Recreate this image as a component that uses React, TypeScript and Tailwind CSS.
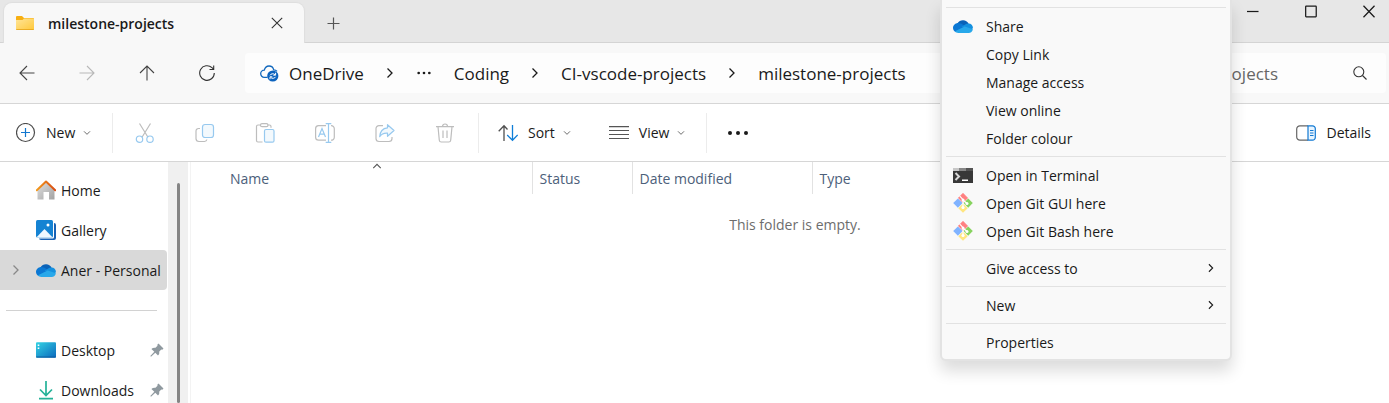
import React from "react";

type IconProps = { className?: string };

const Chevron = ({ className = "" }: IconProps) => (
  <svg viewBox="0 0 12 12" className={`shrink-0 ${className}`} fill="none" stroke="currentColor" strokeWidth="1.3">
    <path d="M3.5 1.5 8 6l-4.5 4.5" />
  </svg>
);

const Cloud = ({ className = "" }: IconProps) => (
  <svg viewBox="0 0 20 14" className={`shrink-0 ${className}`}>
    <path d="M4.5 4.3A6.4 6.4 0 0 1 15.6 4.6L12 9 5 7Z" fill="#0a62b8" />
    <path d="M5.2 4c2 0 3.3.7 4.8 1.8L14 8.5 3 13.2C1.200 12.400 0 10.900 0 9.100 0 6.200 2.400 4 5.200 4Z" fill="#0b78d4" />
    <path d="M15.600 4.600C18 4.600 20 6.600 20 9.200L17.500 11 8.500 7.700C11 6.800 12.500 4.600 15.600 4.600Z" fill="#1490df" />
    <path d="M2 12.300 11.700 7.500 19.900 10.200C19.500 12.400 17.800 14 15.600 14H5.200C3.900 14 2.700 13.300 2 12.300Z" fill="#28a8ea" />
  </svg>
);

const FolderIcon = () => (
  <svg viewBox="0 0 18 14" className="h-3.5 w-[18px] shrink-0">
    <defs>
      <linearGradient id="folder" x1="0" y1="0" x2="1" y2="1">
        <stop offset="0" stopColor="#ffe598" />
        <stop offset="1" stopColor="#ffc83a" />
      </linearGradient>
    </defs>
    <path d="M0 1a1 1 0 0 1 1-1h5l2 2h9a1 1 0 0 1 1 1v4H0Z" fill="#f7af12" />
    <path d="M0 4h6.500L8 2.600h9.300q.7 0 .7.700V13q0 1-1 1H1q-1 0-1-1Z" fill="url(#folder)" />
    <path d="M.2 13.500h17.600" stroke="#e6a318" strokeWidth=".8" />
  </svg>
);

const Arrow = ({ className = "" }: IconProps) => (
  <svg viewBox="0 0 16 16" className={`size-4 ${className}`} fill="none" stroke="currentColor" strokeWidth="1.1">
    <path d="M15.500 8H1M8 1 1 8l7 7" />
  </svg>
);

const RefreshIcon = () => (
  <svg viewBox="0 0 16 16" className="size-4" fill="none" stroke="#333" strokeWidth="1.1">
    <path d="M15.300 8A7.300 7.300 0 1 1 13 2.700L14.500 4.200M14.700.5v4h-4.200" />
  </svg>
);

const SyncCloud = () => (
  <svg viewBox="0 0 19 17" className="h-[17px] w-[19px] shrink-0" fill="none">
    <path d="M7.500 12.300H4.200A3.500 3.500 0 0 1 4.300 5.200C4.900 2.700 6.800 1 9 1c2.500 0 4.200 1.600 4.700 3.800 1.300 0 2.600.6 3.300 1.600" stroke="#1268bd" strokeWidth="1.3" />
    <circle cx="12.800" cy="11" r="5.600" fill="#0c63be" />
    <path d="M10 10.300c.6-1.500 3.500-2.300 5-.6M15.600 7.800v2.400h-2.300M15.600 11.800c-.7 1.500-3.500 2.200-5 .6M10 14.200v-2.400h2.300" stroke="#fff" />
  </svg>
);

const CutIcon = () => (
  <svg viewBox="0 0 20 20" className="size-5" fill="none" strokeWidth="1.200">
    <path d="M4.500.5 13 14.300M15.500.5 7 14.300" stroke="#bdbdbd" />
    <circle cx="4.500" cy="16.200" r="3.200" stroke="#97c9ef" />
    <circle cx="15" cy="16.200" r="3.200" stroke="#97c9ef" />
  </svg>
);

const CopyIcon = () => (
  <svg viewBox="0 0 20 20" className="size-5" fill="none" strokeWidth="1.200">
    <path d="M5 5.500H3.500A2.500 2.500 0 0 0 1 8v7.500A3 3 0 0 0 4 18.500h5.500a2.500 2.500 0 0 0 2.400-2" stroke="#bdbdbd" />
    <rect x="7.500" y="1.500" width="11" height="13" rx="2.500" stroke="#97c9ef" fill="#f3f9fd" />
  </svg>
);

const PasteIcon = () => (
  <svg viewBox="0 0 20 20" className="size-5" fill="none" strokeWidth="1.200">
    <path d="M6 2H3A1.500 1.500 0 0 0 1.500 3.500v14A1.500 1.500 0 0 0 3 19h4.500M12.500 2h2A1.500 1.500 0 0 1 16 3.500v1.300" stroke="#bdbdbd" />
    <rect x="5.500" y=".7" width="7.500" height="3" rx="1.500" stroke="#bdbdbd" />
    <rect x="9.500" y="6.500" width="9.500" height="12.700" rx="1.500" stroke="#97c9ef" fill="#f3f9fd" />
  </svg>
);

const RenameIcon = () => (
  <svg viewBox="0 0 20 20" className="size-5" fill="none" strokeWidth="1.200">
    <path d="M11 2.700H3.500A3 3 0 0 0 .6 5.700v8.500a3 3 0 0 0 3 3H11M16 2.700a3 3 0 0 1 3.300 3v8.500a3 3 0 0 1-3.300 3" stroke="#bdbdbd" />
    <path d="M3.500 14 7 5.500 10.500 14M4.700 11.200h4.600M13.500.7v18.600M10.700.7h5.600M10.700 19.300h5.600" stroke="#97c9ef" />
  </svg>
);

const ShareIcon = () => (
  <svg viewBox="0 0 20 20" className="size-5" fill="none" strokeWidth="1.200" strokeLinejoin="round">
    <path d="M8 2.600H4a3 3 0 0 0-3 3v9.900a3 3 0 0 0 3 3h10a3 3 0 0 0 3-3V14" stroke="#bdbdbd" />
    <path d="M12.500 1.700 19 7.500l-6.500 5.800V10.200C9 9.900 6.500 11 4.700 13.700 5 8.500 8 5.200 12.500 4.800Z" stroke="#97c9ef" fill="#f3f9fd" />
  </svg>
);

const DeleteIcon = () => (
  <svg viewBox="0 0 20 20" className="size-5" fill="none" stroke="#bdbdbd" strokeWidth="1.200">
    <path d="M1 3.600h18M3 3.800l1.300 13.400A2 2 0 0 0 6.300 19h7.400a2 2 0 0 0 2-1.800L17 3.800M7.500 3.500a2.500 2.500 0 0 1 5 0M8 7.500V15M12 7.500V15" />
  </svg>
);

const NewIcon = () => (
  <svg viewBox="0 0 20 20" className="size-5" fill="none" strokeWidth="1.200">
    <circle cx="9.500" cy="9.500" r="9" stroke="#4d4d4d" />
    <path d="M9.500 5v9M5 9.500h9" stroke="#1377cf" />
  </svg>
);

const SortIcon = () => (
  <svg viewBox="0 0 20 18" className="h-[18px] w-5" fill="none" strokeWidth="1.300">
    <path d="M6 17V2M.7 7.200 6 1.700 9.500 5.500" stroke="#505050" />
    <path d="M14.500 1v15M9.200 11l5.300 5.300L19.700 11" stroke="#0f7ed8" />
  </svg>
);

const ViewIcon = () => (
  <svg viewBox="0 0 20 14" className="h-3.5 w-5" stroke="#555" strokeWidth="1.100">
    <path d="M0 .6h20M0 4.500h20M0 8.500h20M0 12.500h20" />
  </svg>
);

const DetailsIcon = () => (
  <svg viewBox="0 0 20 16" className="h-4 w-5" fill="none" strokeWidth="1.200">
    <path d="M12 .8H4A3.200 3.200 0 0 0 .7 4v8A3.200 3.200 0 0 0 4 15.200h8" stroke="#666" />
    <path d="M12 .8h4.500A2.800 2.800 0 0 1 19.300 3.600v8.800a2.800 2.800 0 0 1-2.800 2.800H12Z" stroke="#1279d3" fill="#e8f5ff" />
    <path d="M14 5.500h3.500M14 8h3.500M14 10.500h3.500" stroke="#1279d3" />
  </svg>
);

const HomeIcon = () => (
  <svg viewBox="0 0 20 20" className="size-5 shrink-0">
    <defs>
      <linearGradient id="wall" x1="0" y1="0" x2="1" y2="1">
        <stop offset="0" stopColor="#e1e1e1" />
        <stop offset="1" stopColor="#a2a2a2" />
      </linearGradient>
      <linearGradient id="roof">
        <stop offset="0" stopColor="#f39a1d" />
        <stop offset="1" stopColor="#d84b12" />
      </linearGradient>
    </defs>
    <path d="M1.500 9 10 1.500 18.500 9v10.500H13V12H7.500v7.500h-6Z" fill="url(#wall)" />
    <path d="M.8 10.200 10 1.500l9.200 8.700" fill="none" stroke="url(#roof)" strokeWidth="2" strokeLinecap="round" strokeLinejoin="round" />
  </svg>
);

const GalleryIcon = () => (
  <svg viewBox="0 0 20 20" className="size-5 shrink-0">
    <rect x="3" y="3" width="17" height="17" rx="2" fill="#1761b5" />
    <rect width="18" height="18.600" rx="1.500" fill="#fff" />
    <rect width="17" height="17.500" rx="1.500" fill="#1583d3" />
    <path d="M.8 17 8.500 9l7.700 8q-.3.500-.8.500H1.500q-.5 0-.7-.5Z" fill="#eef7ff" />
    <circle cx="12" cy="5" r="1.500" fill="#fff" />
  </svg>
);

const DesktopIcon = () => (
  <svg viewBox="0 0 20 16" className="h-4 w-5 shrink-0">
    <defs>
      <linearGradient id="desk" x1="0" y1="0" x2="1" y2="1">
        <stop offset="0" stopColor="#34d3e4" />
        <stop offset="1" stopColor="#0b69bd" />
      </linearGradient>
    </defs>
    <rect y=".3" width="20" height="15.400" rx="1" fill="url(#desk)" />
    <path d="M.3 15h19.400" stroke="#0e5d9e" />
    <path d="M1.700 2.500h1.600v1.500H1.700zM1.700 5.500h1.600V7H1.700z" fill="#fff" />
  </svg>
);

const DownloadIcon = () => (
  <svg viewBox="0 0 20 20" className="size-5 shrink-0" fill="none" stroke="#24b298" strokeWidth="1.700">
    <path d="M10 1v14M4 9.500l6 6 6-6M3 18.700h14" />
  </svg>
);

const PinIcon = () => (
  <svg viewBox="0 0 14 14" className="size-3.5 shrink-0" fill="#8f999f">
    <path d="m8.500.5 5 5-1.200 1.200-1-.2-2 2q.4 2.600-1.300 4L5.300 9.700 1 13.700l-.7-.7 4-4.300L1.400 6q1.500-1.600 4.100-1.300l2-2-.2-1Z" />
  </svg>
);

const TerminalIcon = () => (
  <svg viewBox="0 0 20 15" className="h-[15px] w-5">
    <path d="M0 0h20v15H0z" fill="#383838" />
    <path d="M0 0h6v3H0z" fill="#c8c8c8" />
    <path d="M6 0h7v3H6z" fill="#888" />
    <path d="M13 0h7v3h-7z" fill="#555" />
    <path d="m2.500 5 3.500 3.500L2.500 12" stroke="#d8d8d8" strokeWidth="2" fill="none" />
    <path d="M9 11.500h6V13H9z" fill="#fff" />
  </svg>
);

const GitIcon = () => (
  <svg viewBox="0 0 20 20" className="size-5">
    <path d="M10 .2 14.700 5 10 9.700 5.300 5Z" fill="#ff8080" stroke="#ff8080" strokeWidth=".6" strokeLinejoin="round" />
    <path d="M4.900 5.400 9.600 10l-4.700 4.700L.2 10Z" fill="#80b3ff" />
    <path d="M15.200 5.400 19.800 10l-4.600 4.700L10.500 10Z" fill="#87d35f" />
    <path d="m10 10.400 4.700 4.800-4.700 4.600-4.700-4.600Z" fill="#ffe680" />
    <path d="m6.800 3.200 3.200 3.500v9M10 7l4 3.500" stroke="#fff" strokeWidth="1.200" fill="none" />
    <circle cx="10" cy="7" r="1.500" fill="#fff" />
    <circle cx="10" cy="14.500" r="1.600" fill="#fff" />
    <circle cx="14" cy="10.500" r="1.500" fill="#fff" />
  </svg>
);

const Dots = ({ className = "" }: IconProps) => (
  <svg viewBox="0 0 22 6" className={className} fill="#1a1a1a">
    <circle cx="3" cy="3" r="2" />
    <circle cx="11" cy="3" r="2" />
    <circle cx="19" cy="3" r="2" />
  </svg>
);

function TitleBar() {
  return (
    <header className="flex h-[43px] shrink-0 items-end border-b border-[#d4d4d4] bg-[#e7e7e7] pl-1">
      <div className="-mb-px flex h-10 w-[300px] items-center rounded-t-lg bg-[#f8f8f8] pl-3 pr-[19px] shadow-[0_0_1px_1px_#dedede] [clip-path:inset(-2px_-2px_0_-2px)]">
        <FolderIcon />
        <span className="ml-3.5 flex-1 font-semibold">milestone-projects</span>
        <button aria-label="Close tab" className="flex size-4 items-center justify-center">
          <svg viewBox="0 0 12 12" className="size-3" stroke="#333" strokeWidth="1.100">
            <path d="m.8.8 10.400 10.400M11.200.8.800 11.200" />
          </svg>
        </button>
      </div>
      <button aria-label="New tab" className="mb-3 ml-[23px] flex size-[13px] items-center justify-center">
        <svg viewBox="0 0 13 13" className="size-[13px]" stroke="#555" strokeWidth="1.200">
          <path d="M6.500.5v12M.5 6.500h12" />
        </svg>
      </button>
      <div className="mb-6 ml-auto mr-3.5 flex items-center gap-[46px]">
        {[
          ["Minimise", "M0 6.500h12"],
          ["Maximise", "M1.200 1h10q.5 0 .5.500v10q0 .5-.5.500h-10q-.5 0-.5-.5v-10q0-.5.5-.5Z"],
          ["Close", "m.5.500 11.500 12M12 .5.500 12.500"],
        ].map(([label, d]) => (
          <button key={label} aria-label={label}>
            <svg viewBox="0 0 12.500 13" className="h-[13px] w-3" fill="none" stroke="#1a1a1a" strokeWidth="1.300">
              <path d={d} />
            </svg>
          </button>
        ))}
      </div>
    </header>
  );
}

function NavBar() {
  return (
    <div className="flex h-[61px] shrink-0 items-center border-b border-[#d6d6d6] bg-[#f8f8f8] pl-[19px] pr-[3px]">
      <div className="flex w-[226px] gap-11">
        <button aria-label="Back"><Arrow className="text-[#444]" /></button>
        <button aria-label="Forward" disabled><Arrow className="rotate-180 text-[#b8b8b8]" /></button>
        <button aria-label="Up"><Arrow className="rotate-90 text-[#444]" /></button>
        <button aria-label="Refresh"><RefreshIcon /></button>
      </div>
      <nav aria-label="Address" className="flex h-10 flex-1 items-center rounded bg-[#fdfdfd] pl-[15px] text-[17px]">
        <SyncCloud />
        <a href="#onedrive" className="ml-2.5">OneDrive</a>
        <Chevron className="ml-5 size-3" />
        <button aria-label="Hidden folders" className="ml-5 mr-[22px]">
          <Dots className="h-1 w-4" />
        </button>
        <a href="#coding">Coding</a>
        <Chevron className="mx-5 size-3" />
        <a href="#ci">CI-vscode-projects</a>
        <Chevron className="mx-5 size-3" />
        <a href="#milestone">milestone-projects</a>
      </nav>
      <div className="ml-3 flex h-10 w-[322px] items-center rounded bg-[#fdfdfd] pr-[19px]">
        <input
          type="search"
          aria-label="Search milestone-projects"
          placeholder="Search milestone-projects"
          className="mr-[59px] w-full min-w-0 bg-transparent text-right text-[17px] outline-none placeholder:text-[#666]"
        />
        <svg viewBox="0 0 14 14" className="size-3.5 shrink-0" fill="none" stroke="#333" strokeWidth="1.100">
          <circle cx="5.800" cy="5.800" r="5" />
          <path d="m9.500 9.500 4 4" />
        </svg>
      </div>
    </div>
  );
}

const Divider = () => <div className="h-10 w-px bg-[#ececec]" />;

const fileActions = [
  { label: "Cut", icon: <CutIcon /> },
  { label: "Copy", icon: <CopyIcon /> },
  { label: "Paste", icon: <PasteIcon /> },
  { label: "Rename", icon: <RenameIcon /> },
  { label: "Share", icon: <ShareIcon /> },
  { label: "Delete", icon: <DeleteIcon /> },
];

const MenuButton = ({ icon, label }: { icon: React.ReactNode; label: string }) => (
  <button className="flex items-center">
    {icon}
    <span className="ml-2.5">{label}</span>
    <Chevron className="ml-2 size-2 rotate-90 text-[#555]" />
  </button>
);

function Toolbar() {
  return (
    <div className="flex h-[58px] shrink-0 items-center border-b border-[#d6d6d6] pl-4 pr-[18px]">
      <div className="w-24"><MenuButton icon={<NewIcon />} label="New" /></div>
      <Divider />
      <div className="flex gap-10 pl-[22px] pr-[23px]">
        {fileActions.map((a) => (
          <button key={a.label} aria-label={a.label} disabled>{a.icon}</button>
        ))}
      </div>
      <Divider />
      <div className="flex items-center gap-[38px] pl-[19px] pr-[21px]">
        <MenuButton icon={<SortIcon />} label="Sort" />
        <MenuButton icon={<ViewIcon />} label="View" />
      </div>
      <Divider />
      <button aria-label="More options" className="ml-5"><Dots className="h-1.5 w-[22px]" /></button>
      <button className="ml-auto flex items-center gap-2.5">
        <DetailsIcon />
        Details
      </button>
    </div>
  );
}

const places = [
  { label: "Home", icon: <HomeIcon /> },
  { label: "Gallery", icon: <GalleryIcon /> },
  { label: "Aner - Personal", icon: <Cloud className="h-3.5 w-5" />, selected: true },
];

const pinned = [
  { label: "Desktop", icon: <DesktopIcon /> },
  { label: "Downloads", icon: <DownloadIcon /> },
];

function Sidebar() {
  return (
    <aside className="flex w-[191px] shrink-0 border-r border-[#f3f3f3]">
      <nav aria-label="Folders" className="w-[168px] pt-2">
        {places.map((p) => (
          <a
            key={p.label}
            href="#place"
            className={`mr-px flex h-10 items-center whitespace-nowrap rounded-r-sm ${p.selected ? "bg-[#d9d9d9]" : ""}`}
          >
            <span className="flex w-9 shrink-0 pl-2.5">
              {p.selected && <Chevron className="size-3 text-[#888]" />}
            </span>
            {p.icon}
            <span className="ml-[5px]">{p.label}</span>
          </a>
        ))}
        <div className="flex h-10 items-center pl-1.5 pr-[11px]">
          <hr className="w-full border-[#d2d2d2]" />
        </div>
        {pinned.map((p) => (
          <a key={p.label} href="#pinned" className="flex h-10 items-center pl-9 pr-1">
            {p.icon}
            <span className="ml-[5px] mr-auto">{p.label}</span>
            <PinIcon />
          </a>
        ))}
      </nav>
      <div className="flex w-5 justify-center bg-[#f0f0f0] pt-[21px]">
        <div className="w-[3px] rounded-full bg-[#858585]" />
      </div>
    </aside>
  );
}

function FileList() {
  return (
    <main className="min-w-0 flex-1 pl-2.5">
      <table className="w-full table-fixed text-left">
        <thead className="text-[#4c607a]">
          <tr className="h-8">
            <th scope="col" aria-sort="ascending" className="relative w-[331px] border-r border-[#e2e2e2] pl-[29px] font-normal">
              Name
              <Chevron className="absolute left-[171px] -top-px size-2.5 -rotate-90 text-[#555]" />
            </th>
            <th scope="col" className="w-[100px] border-r border-[#e2e2e2] pl-[7px] font-normal">Status</th>
            <th scope="col" className="w-[180px] border-r border-[#e2e2e2] pl-[7px] font-normal">Date modified</th>
            <th scope="col" className="pl-[7px] font-normal">Type</th>
          </tr>
        </thead>
        <tbody>
          <tr>
            <td colSpan={4} className="pt-5 text-center text-[#6d6d6d]">This folder is empty.</td>
          </tr>
        </tbody>
      </table>
    </main>
  );
}

type Item = { label: string; icon?: React.ReactNode; submenu?: boolean };

const menuGroups: Item[][] = [
  [
    { label: "Share", icon: <Cloud className="h-3.5 w-5" /> },
    { label: "Copy Link" },
    { label: "Manage access" },
    { label: "View online" },
    { label: "Folder colour" },
  ],
  [
    { label: "Open in Terminal", icon: <TerminalIcon /> },
    { label: "Open Git GUI here", icon: <GitIcon /> },
    { label: "Open Git Bash here", icon: <GitIcon /> },
  ],
  [{ label: "Give access to", submenu: true }],
  [{ label: "New", submenu: true }],
  [{ label: "Properties" }],
];

function ContextMenu() {
  return (
    <div
      role="menu"
      className="absolute right-[157px] top-0 w-[292px] rounded-b-md border-x-2 border-b-2 border-[#e3e3e3] bg-[#f9f9f9] px-1 pb-[3px] pt-[3px] shadow-[0_10px_16px_rgba(0,0,0,0.14)]"
    >
      {menuGroups.map((group, i) => (
        <div key={i} role="group">
          <hr className="my-1 border-[#e2e2e2]" />
          {group.map((item) => (
            <button key={item.label} role="menuitem" className="flex h-7 w-full items-center pl-[7px] pr-2.5 text-left">
              <span className="w-[33px]">{item.icon}</span>
              {item.label}
              {item.submenu && <Chevron className="ml-auto size-2.5" />}
            </button>
          ))}
        </div>
      ))}
    </div>
  );
}

export default function App() {
  return (
    <div className="relative flex h-screen flex-col overflow-hidden bg-white font-['Open_Sans','Noto_Sans',sans-serif] text-sm/[21px] text-[#1a1a1a]">
      <TitleBar />
      <NavBar />
      <Toolbar />
      <div className="flex min-h-0 flex-1">
        <Sidebar />
        <FileList />
      </div>
      <ContextMenu />
    </div>
  );
}
